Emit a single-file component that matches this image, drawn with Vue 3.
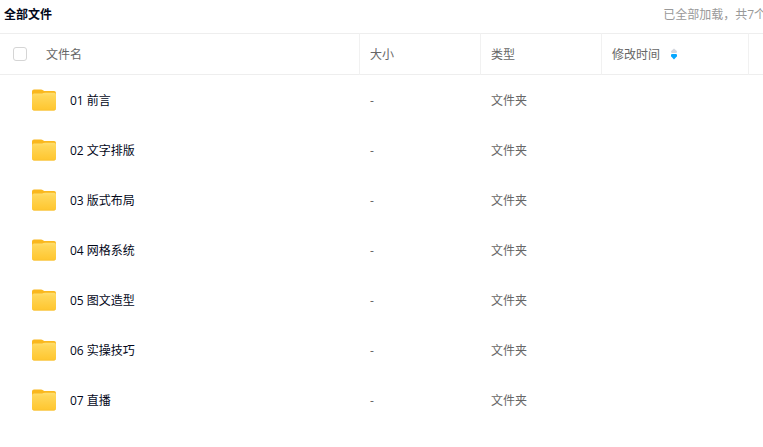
<template>
  <main class="file-page">
    <header class="top-bar">
      <h1 class="title">全部文件</h1>
      <span class="count">已全部加载，共{{ files.length }}个</span>
    </header>

    <table class="file-table">
      <colgroup>
        <col />
        <col class="col-size" />
        <col class="col-type" />
        <col class="col-time" />
        <col class="col-rest" />
      </colgroup>
      <thead>
        <tr>
          <th scope="col">
            <div class="name-head">
              <input v-model="allChecked" type="checkbox" class="check" aria-label="全选" />
              <span class="label">文件名</span>
            </div>
          </th>
          <th scope="col"><span class="label">大小</span></th>
          <th scope="col"><span class="label">类型</span></th>
          <th scope="col">
            <button type="button" class="sort" @click="descending = !descending">
              <span class="label">修改时间</span>
              <!-- Up / down sort arrows, the active one is blue -->
              <svg class="sort-icon" viewBox="0 0 6 12" aria-hidden="true">
                <path d="M3 0.4 L5.8 3 Q6.4 5 4.8 5 H1.2 Q-0.4 5 0.2 3 Z" :fill="descending ? '#d3d6de' : '#06a7ff'" />
                <path d="M3 11.4 L5.8 8.6 Q6.6 6 4.8 6 H1.2 Q-0.6 6 0.2 8.6 Z" :fill="descending ? '#06a7ff' : '#d3d6de'" />
              </svg>
            </button>
          </th>
          <th></th>
        </tr>
      </thead>
      <tbody>
        <tr v-for="file in files" :key="file.name">
          <td>
            <div class="name-cell">
              <svg class="folder" viewBox="0 0 24 22" aria-hidden="true">
                <defs>
                  <linearGradient id="folder-front" x1="0" y1="0" x2="0" y2="1">
                    <stop offset="0" stop-color="#ffdf70" />
                    <stop offset="0.2" stop-color="#ffd657" />
                    <stop offset="1" stop-color="#ffc62e" />
                  </linearGradient>
                </defs>
                <path d="M0 2.5 Q0 0.5 2 0.5 H9 Q10.2 0.5 11 1.2 L12.2 2 H22 Q24 2 24 4 V12 H0 Z" fill="#fab81e" />
                <path d="M0 7 Q0 4.6 2.2 4.6 H9 Q10.4 4.6 11.4 4.1 Q12.2 3.7 13.4 3.7 H22 Q24 3.7 24 5.8 V19.4 Q24 21.4 22 21.4 H2 Q0 21.4 0 19.4 Z" fill="url(#folder-front)" />
                <path d="M0.6 20.3 Q1 21.2 2 21.2 H22 Q23 21.2 23.4 20.3" fill="none" stroke="#f6bd30" stroke-width="0.6" />
              </svg>
              <a href="#" class="label name" @click.prevent>{{ file.name }}</a>
            </div>
          </td>
          <td><span class="label">{{ file.size }}</span></td>
          <td><span class="label">{{ file.type }}</span></td>
          <td></td>
          <td></td>
        </tr>
      </tbody>
    </table>
  </main>
</template>

<script setup>
import { ref } from 'vue';

const allChecked = ref(false);
const descending = ref(true);

const names = ['01 前言', '02 文字排版', '03 版式布局', '04 网格系统', '05 图文造型', '06 实操技巧', '07 直播'];

const files = names.map((name) => ({ name, size: '-', type: '文件夹' }));
</script>

<style>
body {
  margin: 0;
  background: #fff;
}
</style>

<style scoped>
.file-page {
  overflow: hidden;
  font-family: "Open Sans", "Noto Sans CJK SC", sans-serif;
  font-size: 12px;
  line-height: 18px;
  color: #666;
}

.top-bar {
  display: flex;
  align-items: center;
  justify-content: space-between;
  margin-right: -5px;
  padding: 6px 2px 9px 4px;
}

.title {
  margin: 0;
  font-size: 12px;
  font-weight: 700;
  color: #03081a;
}

.count {
  color: #999;
  white-space: nowrap;
}

.file-table {
  width: 100%;
  table-layout: fixed;
  border-collapse: separate;
  border-spacing: 0;
}

.col-size,
.col-type {
  width: 121px;
}

.col-time {
  width: 147px;
}

.col-rest {
  width: 14px;
}

th {
  box-sizing: border-box;
  height: 42px;
  padding: 0 10px;
  border-top: 1px solid #eee;
  border-right: 1px solid #f1f1f1;
  border-bottom: 1px solid #eee;
  font-weight: 400;
  text-align: left;
}

th:last-child {
  padding: 0;
  border-right: 0;
}

td {
  height: 50px;
  padding: 0 10px;
}

td:last-child {
  padding: 0;
}

/* Keeps the glyphs optically centred in the row */
.label {
  display: block;
  padding-top: 2px;
}

.name-head {
  display: flex;
  align-items: center;
  gap: 19px;
  padding-left: 3px;
}

.check {
  appearance: none;
  box-sizing: border-box;
  width: 14px;
  height: 14px;
  margin: 0;
  border: 1px solid #d5d5d5;
  border-radius: 3px;
  background: #fff;
}

.check:checked {
  border-color: #06a7ff;
  background: #06a7ff;
}

.sort {
  display: flex;
  align-items: center;
  gap: 11px;
  padding: 0;
  border: 0;
  background: none;
  font: inherit;
  color: inherit;
  cursor: pointer;
}

.sort-icon {
  width: 6px;
  height: 12px;
}

.name-cell {
  display: flex;
  align-items: center;
  gap: 14px;
  padding-left: 22px;
}

.folder {
  width: 24px;
  height: 22px;
}

.name {
  color: #03081a;
  text-decoration: none;
}
</style>
